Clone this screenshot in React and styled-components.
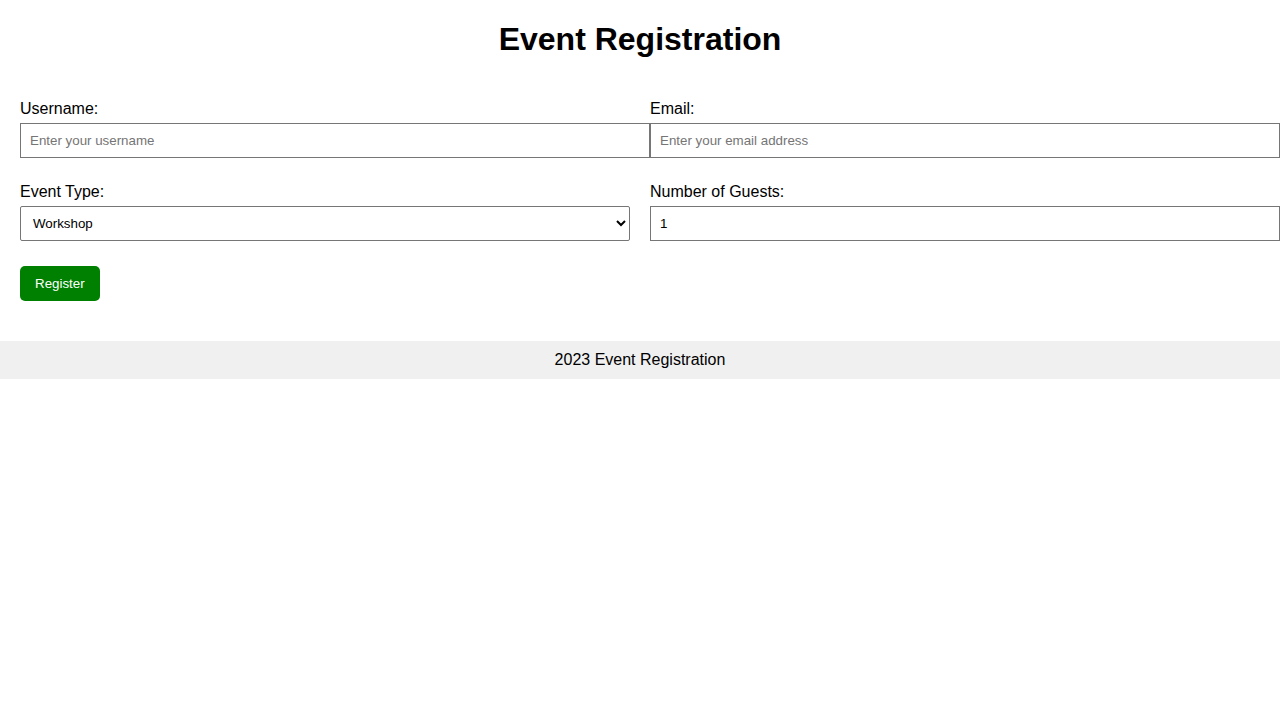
import styled, { createGlobalStyle } from "styled-components";

const GlobalStyle = createGlobalStyle`
  body {
    margin: 0;
    font-family: "Liberation Sans", Arial, sans-serif;
    background: #fff;
    color: #000;
  }
`;

const Page = styled.div`
  padding: 21px 20px 20px;
`;

const Title = styled.h1`
  font-size: 32px;
  font-weight: bold;
  text-align: center;
  margin: 0 0 42px;
`;

const Form = styled.form`
  display: grid;
  grid-template-columns: 1fr 1fr;
  column-gap: 20px;
  row-gap: 25px;
`;

const Group = styled.div`
  min-width: 0;
`;

const Label = styled.label`
  display: block;
  font-size: 16px;
  margin-bottom: 5px;
`;

const Input = styled.input`
  width: 100%;
  padding: 9px;
  font-family: "Liberation Sans", Arial, sans-serif;
  font-size: 13.33px;
  border: 1px solid #767676;
  box-sizing: content-box;
  margin: 0;

  &::placeholder {
    color: #757575;
  }
`;

const Select = styled.select`
  width: 100%;
  height: 35px;
  padding: 0 8px;
  font-family: "Liberation Sans", Arial, sans-serif;
  font-size: 13.33px;
  border: 1px solid #767676;
  border-radius: 2px;
  background: #fff;
  margin: 0;
`;

const Actions = styled.div`
  grid-column: 1 / -1;
`;

const Button = styled.button`
  background: #008000;
  color: #fff;
  border: none;
  border-radius: 5px;
  padding: 10px 15px;
  font-family: "Liberation Sans", Arial, sans-serif;
  font-size: 13.33px;
  cursor: pointer;
`;

const Footer = styled.footer`
  margin-top: 20px;
  background: #f0f0f0;
  text-align: center;
  padding: 10px;
  font-size: 16px;
`;

const App = () => {
  return (
    <>
      <GlobalStyle />
      <Page>
        <Title>Event Registration</Title>
        <Form onSubmit={(e) => e.preventDefault()}>
          <Group>
            <Label htmlFor="username">Username:</Label>
            <Input id="username" type="text" placeholder="Enter your username" />
          </Group>
          <Group>
            <Label htmlFor="email">Email:</Label>
            <Input id="email" type="email" placeholder="Enter your email address" />
          </Group>
          <Group>
            <Label htmlFor="eventType">Event Type:</Label>
            <Select id="eventType" defaultValue="workshop">
              <option value="workshop">Workshop</option>
              <option value="conference">Conference</option>
              <option value="seminar">Seminar</option>
            </Select>
          </Group>
          <Group>
            <Label htmlFor="guests">Number of Guests:</Label>
            <Input id="guests" type="number" min="1" defaultValue="1" />
          </Group>
          <Actions>
            <Button type="submit">Register</Button>
          </Actions>
        </Form>
      </Page>
      <Footer>2023 Event Registration</Footer>
    </>
  );
};

export default App;
